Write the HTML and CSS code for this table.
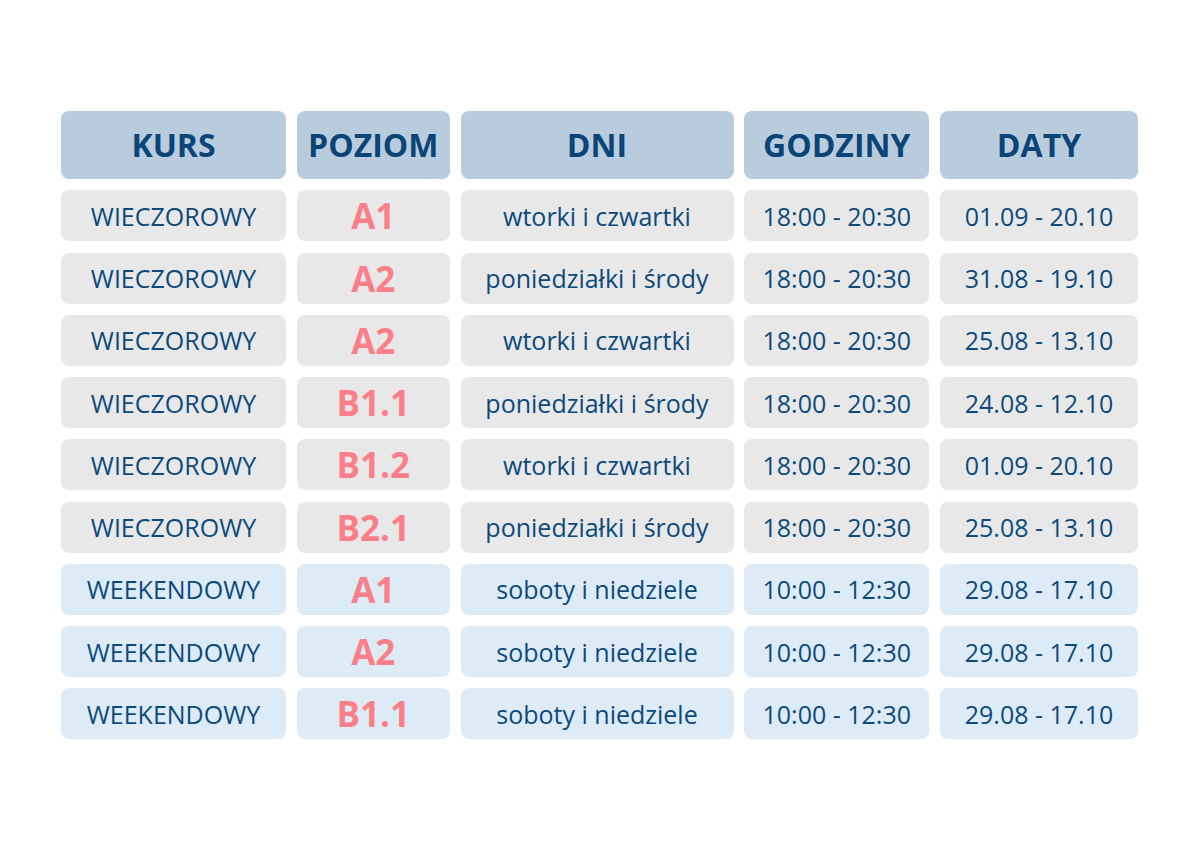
FILE: index.html
```html
<!DOCTYPE html>
<html lang="pl">
<head>
<meta charset="utf-8">
<title>Kursy</title>
<link rel="stylesheet" href="styles.css">
</head>
<body>
<div class="table">
  <div class="cell head">KURS</div>
  <div class="cell head">POZIOM</div>
  <div class="cell head">DNI</div>
  <div class="cell head">GODZINY</div>
  <div class="cell head">DATY</div>

  <div class="cell grey">WIECZOROWY</div>
  <div class="cell grey level">A1</div>
  <div class="cell grey">wtorki i czwartki</div>
  <div class="cell grey">18:00 - 20:30</div>
  <div class="cell grey">01.09 - 20.10</div>

  <div class="cell grey">WIECZOROWY</div>
  <div class="cell grey level">A2</div>
  <div class="cell grey">poniedziałki i środy</div>
  <div class="cell grey">18:00 - 20:30</div>
  <div class="cell grey">31.08 - 19.10</div>

  <div class="cell grey">WIECZOROWY</div>
  <div class="cell grey level">A2</div>
  <div class="cell grey">wtorki i czwartki</div>
  <div class="cell grey">18:00 - 20:30</div>
  <div class="cell grey">25.08 - 13.10</div>

  <div class="cell grey">WIECZOROWY</div>
  <div class="cell grey level">B1.1</div>
  <div class="cell grey">poniedziałki i środy</div>
  <div class="cell grey">18:00 - 20:30</div>
  <div class="cell grey">24.08 - 12.10</div>

  <div class="cell grey">WIECZOROWY</div>
  <div class="cell grey level">B1.2</div>
  <div class="cell grey">wtorki i czwartki</div>
  <div class="cell grey">18:00 - 20:30</div>
  <div class="cell grey">01.09 - 20.10</div>

  <div class="cell grey">WIECZOROWY</div>
  <div class="cell grey level">B2.1</div>
  <div class="cell grey">poniedziałki i środy</div>
  <div class="cell grey">18:00 - 20:30</div>
  <div class="cell grey">25.08 - 13.10</div>

  <div class="cell blue">WEEKENDOWY</div>
  <div class="cell blue level">A1</div>
  <div class="cell blue">soboty i niedziele</div>
  <div class="cell blue">10:00 - 12:30</div>
  <div class="cell blue">29.08 - 17.10</div>

  <div class="cell blue">WEEKENDOWY</div>
  <div class="cell blue level">A2</div>
  <div class="cell blue">soboty i niedziele</div>
  <div class="cell blue">10:00 - 12:30</div>
  <div class="cell blue">29.08 - 17.10</div>

  <div class="cell blue">WEEKENDOWY</div>
  <div class="cell blue level">B1.1</div>
  <div class="cell blue">soboty i niedziele</div>
  <div class="cell blue">10:00 - 12:30</div>
  <div class="cell blue">29.08 - 17.10</div>
</div>
</body>
</html>
```

FILE: styles.css
```css
html, body {
  margin: 0;
  padding: 0;
  background: #ffffff;
}

body {
  font-family: "Open Sans", "Noto Sans", sans-serif;
  color: #0c4a7c;
  padding: 111px 0 0 61px;
}

.table {
  display: grid;
  grid-template-columns: 225px 153px 273px 185px 198px;
  grid-template-rows: 68px;
  grid-auto-rows: 51px;
  column-gap: 10.75px;
  row-gap: 11.25px;
  width: 1078px;
}

.cell {
  display: flex;
  align-items: center;
  justify-content: center;
  border-radius: 8px;
  font-size: 25px;
  white-space: nowrap;
}

.head {
  background: #b9ccdd;
  font-weight: 700;
  font-size: 32px;
  color: #0b4577;
  padding-bottom: 2px;
  box-sizing: border-box;
}

.grey {
  background: #e8e8e8;
}

.blue {
  background: #ddebf7;
}

.level {
  color: #fb7f88;
  font-weight: 700;
  font-size: 35px;
}
```
